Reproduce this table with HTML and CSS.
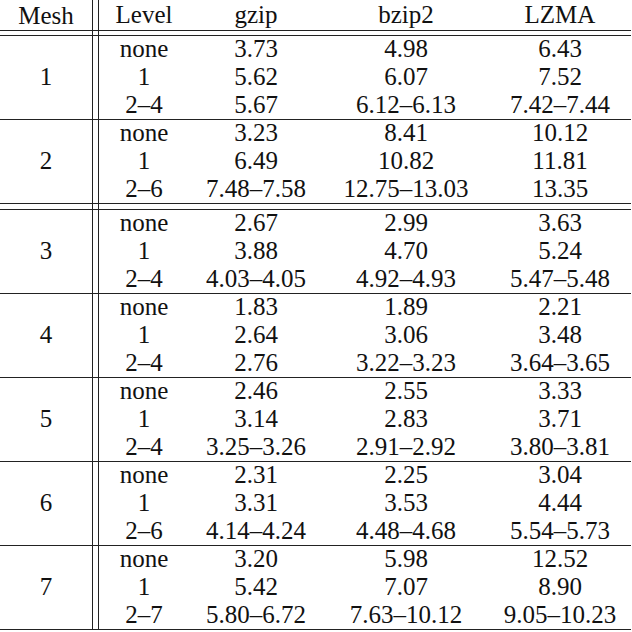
FILE: index.html
```html
<!DOCTYPE html>
<html>
<head>
<meta charset="utf-8">
<link rel="stylesheet" href="styles.css">
</head>
<body>
<div class="table">
  <div class="row head">
    <div class="mesh">Mesh</div><div class="vr"></div>
    <div class="cells"><span>Level</span><span>gzip</span><span>bzip2</span><span>LZMA</span></div>
  </div>
  <div class="hr"></div>
  <div class="row gap"><div class="mesh"></div><div class="vr"></div></div>
  <div class="hr"></div>

  <div class="row group">
    <div class="mesh">1</div><div class="vr"></div>
    <div class="rows">
      <div class="cells"><span>none</span><span>3.73</span><span>4.98</span><span>6.43</span></div>
      <div class="cells"><span>1</span><span>5.62</span><span>6.07</span><span>7.52</span></div>
      <div class="cells"><span>2–4</span><span>5.67</span><span>6.12–6.13</span><span>7.42–7.44</span></div>
    </div>
  </div>
  <div class="hr"></div>

  <div class="row group">
    <div class="mesh">2</div><div class="vr"></div>
    <div class="rows">
      <div class="cells"><span>none</span><span>3.23</span><span>8.41</span><span>10.12</span></div>
      <div class="cells"><span>1</span><span>6.49</span><span>10.82</span><span>11.81</span></div>
      <div class="cells"><span>2–6</span><span>7.48–7.58</span><span>12.75–13.03</span><span>13.35</span></div>
    </div>
  </div>
  <div class="hr"></div>
  <div class="row gap wide"><div class="mesh"></div><div class="vr"></div></div>
  <div class="hr"></div>

  <div class="row group">
    <div class="mesh">3</div><div class="vr"></div>
    <div class="rows">
      <div class="cells"><span>none</span><span>2.67</span><span>2.99</span><span>3.63</span></div>
      <div class="cells"><span>1</span><span>3.88</span><span>4.70</span><span>5.24</span></div>
      <div class="cells"><span>2–4</span><span>4.03–4.05</span><span>4.92–4.93</span><span>5.47–5.48</span></div>
    </div>
  </div>
  <div class="hr"></div>

  <div class="row group">
    <div class="mesh">4</div><div class="vr"></div>
    <div class="rows">
      <div class="cells"><span>none</span><span>1.83</span><span>1.89</span><span>2.21</span></div>
      <div class="cells"><span>1</span><span>2.64</span><span>3.06</span><span>3.48</span></div>
      <div class="cells"><span>2–4</span><span>2.76</span><span>3.22–3.23</span><span>3.64–3.65</span></div>
    </div>
  </div>
  <div class="hr"></div>

  <div class="row group">
    <div class="mesh">5</div><div class="vr"></div>
    <div class="rows">
      <div class="cells"><span>none</span><span>2.46</span><span>2.55</span><span>3.33</span></div>
      <div class="cells"><span>1</span><span>3.14</span><span>2.83</span><span>3.71</span></div>
      <div class="cells"><span>2–4</span><span>3.25–3.26</span><span>2.91–2.92</span><span>3.80–3.81</span></div>
    </div>
  </div>
  <div class="hr"></div>

  <div class="row group">
    <div class="mesh">6</div><div class="vr"></div>
    <div class="rows">
      <div class="cells"><span>none</span><span>2.31</span><span>2.25</span><span>3.04</span></div>
      <div class="cells"><span>1</span><span>3.31</span><span>3.53</span><span>4.44</span></div>
      <div class="cells"><span>2–6</span><span>4.14–4.24</span><span>4.48–4.68</span><span>5.54–5.73</span></div>
    </div>
  </div>
  <div class="hr"></div>

  <div class="row group">
    <div class="mesh">7</div><div class="vr"></div>
    <div class="rows">
      <div class="cells"><span>none</span><span>3.20</span><span>5.98</span><span>12.52</span></div>
      <div class="cells"><span>1</span><span>5.42</span><span>7.07</span><span>8.90</span></div>
      <div class="cells"><span>2–7</span><span>5.80–6.72</span><span>7.63–10.12</span><span>9.05–10.23</span></div>
    </div>
  </div>
  <div class="hr"></div>
</div>
</body>
</html>
```

FILE: styles.css
```css
html, body {
  margin: 0;
  padding: 0;
  background: #fff;
}

.table {
  width: 631px;
  display: flex;
  flex-direction: column;
  font-family: "Liberation Serif", "Times New Roman", serif;
  font-size: 25px;
  line-height: 25px;
  color: #111;
}

.row {
  display: flex;
}

.mesh {
  width: 92px;
  flex: none;
  display: flex;
  align-items: center;
  justify-content: center;
}

.vr {
  width: 7px;
  flex: none;
  box-sizing: border-box;
  border-left: 1px solid #222;
  border-right: 1px solid #222;
}

.cells {
  width: 532px;
  display: grid;
  grid-template-columns: 90px 134px 166px 142px;
  align-items: center;
  justify-items: center;
}

.head {
  height: 30px;
}

.head .cells {
  padding-bottom: 2px;
  box-sizing: border-box;
}

.gap {
  height: 4px;
}

.gap.wide {
  height: 5px;
}

.hr {
  height: 1px;
  background: #222;
}

.group {
  height: 83px;
}

.group .mesh {
  padding-bottom: 2px;
  box-sizing: border-box;
}

.rows {
  display: grid;
  grid-template-rows: repeat(3, 1fr);
}

.rows .cells {
  padding-bottom: 3px;
  box-sizing: border-box;
}
```
